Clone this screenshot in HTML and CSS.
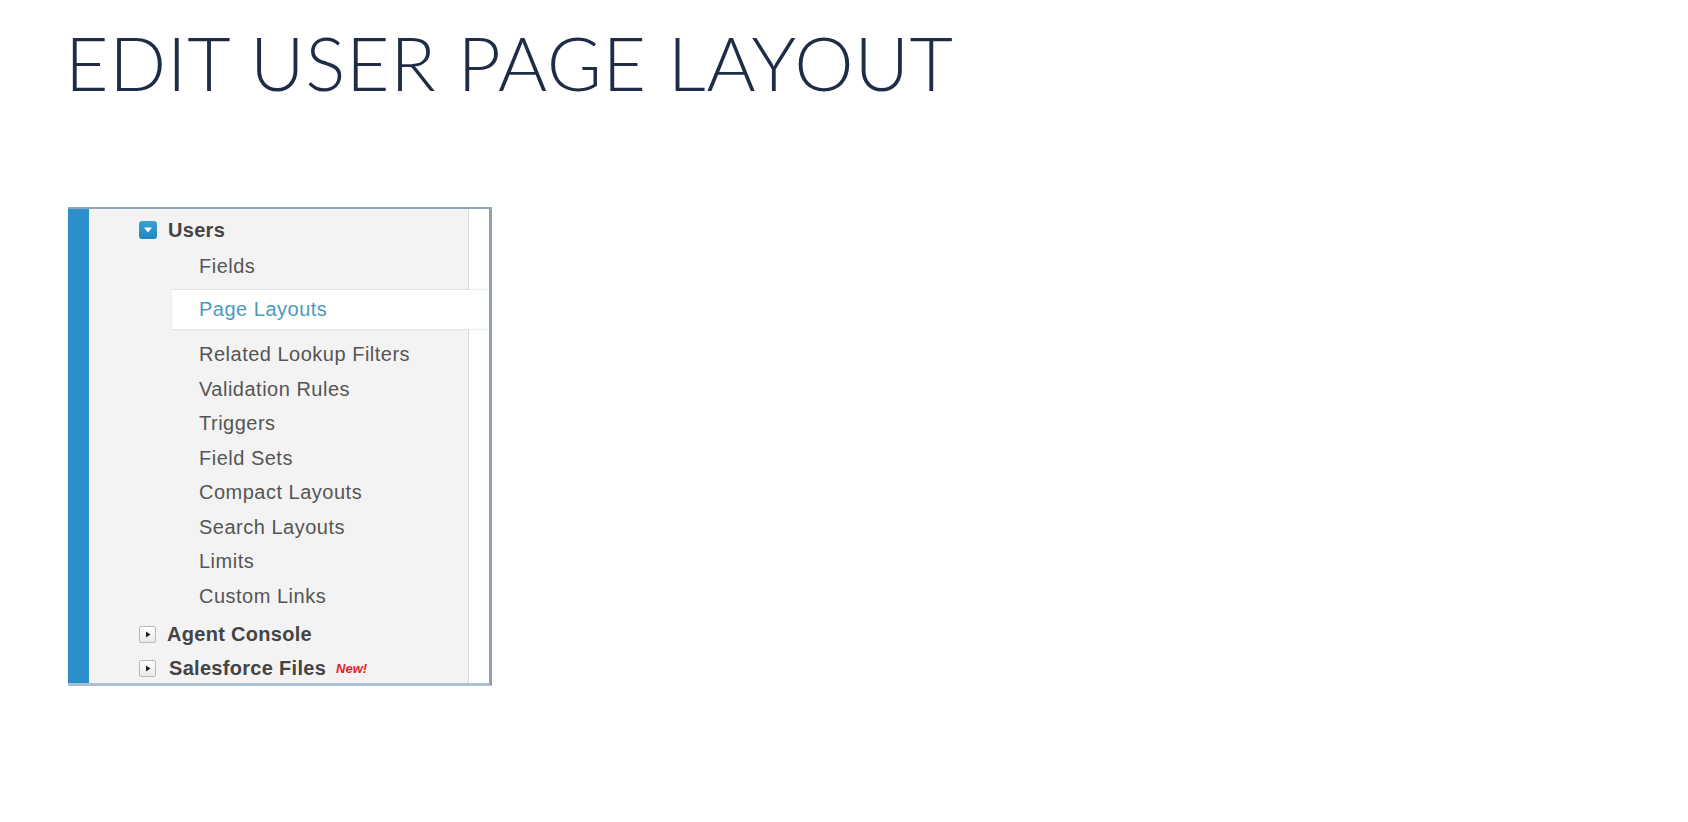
FILE: index.html
```html
<!DOCTYPE html>
<html lang="en">
<head>
<meta charset="utf-8">
<title>Edit User Page Layout</title>
<link rel="stylesheet" href="styles.css">
</head>
<body>
<main class="slide">
  <h1 class="title">EDIT USER PAGE LAYOUT</h1>
  <div class="panel">
    <div class="bar"></div>
    <div class="tree">
      <div class="node open">
        <span class="toggle toggle-open"><svg width="10" height="8" viewBox="0 0 10 8"><path d="M1 1.5h8L5 6.5z" fill="#fff"/></svg></span>
        <span class="node-label">Users</span>
      </div>
      <div class="leaf first">Fields</div>
      <div class="leaf active">Page Layouts</div>
      <div class="leaf">Related Lookup Filters</div>
      <div class="leaf">Validation Rules</div>
      <div class="leaf">Triggers</div>
      <div class="leaf">Field Sets</div>
      <div class="leaf">Compact Layouts</div>
      <div class="leaf">Search Layouts</div>
      <div class="leaf">Limits</div>
      <div class="leaf">Custom Links</div>
      <div class="node closed agent">
        <span class="toggle toggle-closed"><svg width="8" height="9" viewBox="0 0 8 9"><path d="M2 1.5v6l4.5-3z" fill="#222"/></svg></span>
        <span class="node-label">Agent Console</span>
      </div>
      <div class="node closed">
        <span class="toggle toggle-closed"><svg width="8" height="9" viewBox="0 0 8 9"><path d="M2 1.5v6l4.5-3z" fill="#222"/></svg></span>
        <span class="node-label wide">Salesforce Files</span>
        <span class="badge">New!</span>
      </div>
    </div>
  </div>
</main>
</body>
</html>
```
FILE: styles.css
```css
html, body {
  margin: 0;
  padding: 0;
  background: #ffffff;
}

.slide {
  padding: 17px 0 0 68px;
}

.title {
  margin: 0 0 0 -3px;
  font-family: "Lato", "Open Sans", sans-serif;
  font-weight: 300;
  font-size: 75px;
  line-height: 90px;
  color: #1f2c46;
  letter-spacing: 0.7px;
}

.panel {
  margin-top: 100px;
  width: 424px;
  height: 479px;
  box-sizing: border-box;
  display: flex;
  border-top: 2px solid #8ea6bd;
  border-right: 3px solid #8ea2b4;
  border-bottom: 3px solid #a8bfd5;
  overflow: hidden;
}

.bar {
  width: 21px;
  flex: none;
  background: #2d8fc9;
}

.tree {
  flex: 1;
  padding-top: 3px;
  background: linear-gradient(90deg, #f3f3f3 0 379px, #dadada 379px 380px, #ffffff 380px);
  font-family: "Liberation Sans", Arial, sans-serif;
  font-size: 20px;
  letter-spacing: 0.5px;
}

.node {
  display: flex;
  align-items: center;
  height: 36px;
  padding-left: 50px;
  color: #444444;
  font-weight: bold;
  letter-spacing: 0.3px;
}

.node.agent {
  margin-top: 4px;
  height: 34.5px;
}

.node.closed {
  height: 34.5px;
}

.toggle {
  flex: none;
  display: flex;
  align-items: center;
  justify-content: center;
  box-sizing: border-box;
}

.toggle-open {
  width: 18px;
  height: 18px;
  border-radius: 3px;
  background: linear-gradient(#3aa3d4, #1f86bd);
}

.toggle-closed {
  width: 17px;
  height: 17px;
  border: 1px solid #b9b9b9;
  border-radius: 2px;
  background: linear-gradient(#ffffff, #e9e9e9);
}

.node-label {
  margin-left: 11px;
}

.node-label.wide {
  margin-left: 13px;
}

.badge {
  margin-left: 10px;
  color: #e0232b;
  font-size: 13px;
  font-weight: bold;
  font-style: italic;
  letter-spacing: 0;
}

.leaf {
  padding-left: 110px;
  line-height: 34.5px;
  color: #555555;
}

.leaf.first {
  line-height: 36px;
}

.leaf.active {
  margin: 6px 0 8px 83px;
  padding-left: 27px;
  line-height: 39px;
  background: #ffffff;
  color: #4a9abb;
  box-shadow: 0 -1px 1px rgba(0, 0, 0, 0.06), 0 1px 1px rgba(0, 0, 0, 0.06);
}
```
